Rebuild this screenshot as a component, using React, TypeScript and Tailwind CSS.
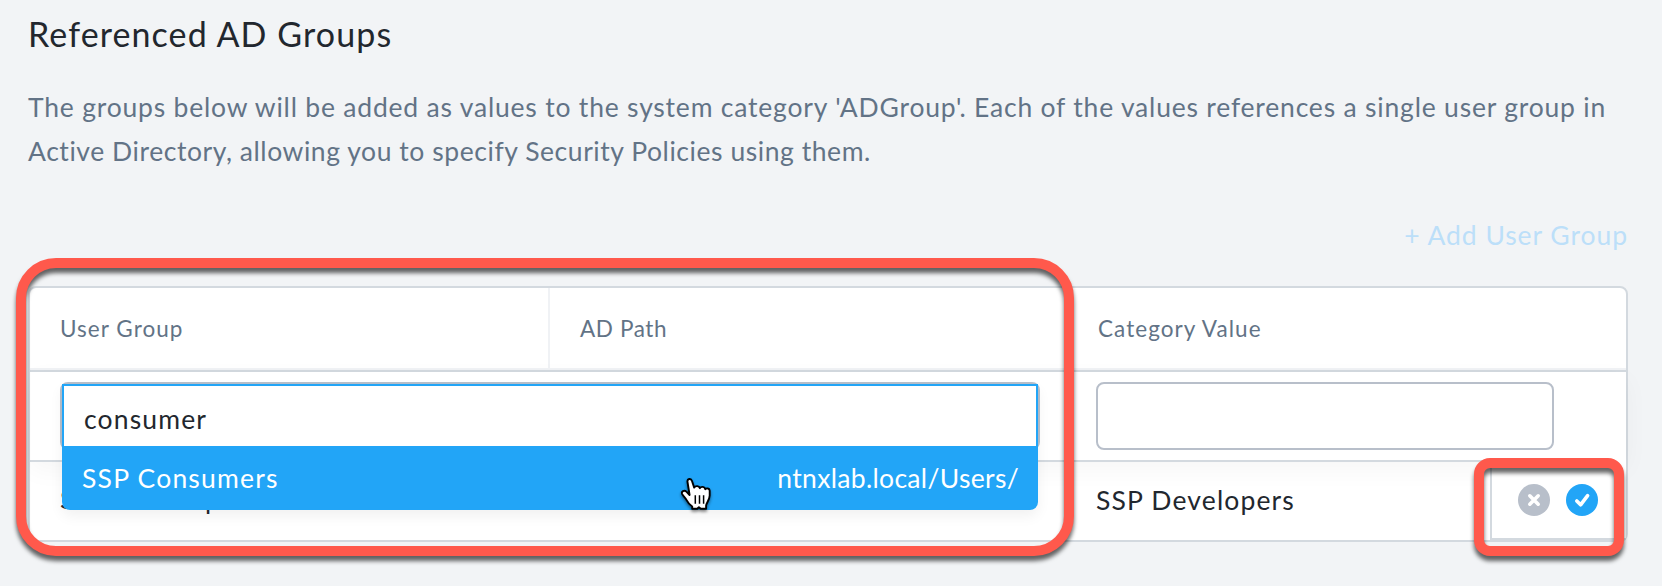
function XCircle() {
  return (
    <svg width="32" height="32" viewBox="0 0 32 32" fill="none">
      <circle cx="16" cy="16" r="16" fill="#b8bfca" />
      <path d="M11.8 11.8L20.2 20.2M20.2 11.8L11.8 20.2" stroke="#fff" strokeWidth="3.6" strokeLinecap="round" />
    </svg>
  );
}

function CheckCircle() {
  return (
    <svg width="32" height="32" viewBox="0 0 32 32" fill="none">
      <circle cx="16" cy="16" r="16" fill="#22a5f7" />
      <path d="M10.8 17L14.6 20.8L21.6 11.6" stroke="#fff" strokeWidth="3.6" strokeLinecap="round" strokeLinejoin="round" />
    </svg>
  );
}

function HandCursor() {
  return (
    <svg
      className="absolute left-[618px] top-[93px] drop-shadow-[0_2px_1.5px_rgba(0,0,0,0.45)]"
      width="32"
      height="36"
      viewBox="0 0 32 36"
      fill="none"
    >
      <path
        d="M12.2 29.5V31.8H17.2L18.9 30.2L20.8 31.8H26.1V28.6C26.3 26.2 29.7 22.5 29.7 18.5V13.8C29.7 11.2 26.3 10.8 25.3 12.3C24.8 9.6 21 9 19.9 11.2C19.2 8.8 15.5 8.4 14.2 10.6L12 4C10.9 .8 6.9 1.6 7.5 5L9.6 18L6.4 14.6C4.2 12.6 .9 14.4 2.2 17.1C3.6 19.8 5.4 20.6 6.6 23.2C8 26.1 9.6 27.8 12.2 29.5Z"
        fill="#fff"
        stroke="#000"
        strokeWidth="1.9"
        strokeLinejoin="round"
      />
      <path d="M15.3 18.3V26.8M19.5 18.3V26.8M23.6 18.3V26.8" stroke="#000" strokeWidth="1.5" />
    </svg>
  );
}

export default function App() {
  return (
    <div className="relative h-[586px] w-[1662px] overflow-hidden bg-[#f2f4f6] pl-7 pr-[34px] pt-3 font-['Lato','Liberation_Sans',sans-serif] text-[26.5px] text-[#22272e]">
      <h1 className="text-[34px] leading-[44px] tracking-[1.1px]">Referenced AD Groups</h1>
      <p className="mt-[29px] whitespace-nowrap leading-[44px] text-[#627386]">
        <span className="block tracking-[0.8px]">
          The groups below will be added as values to the system category 'ADGroup'. Each of the values references a single user group in
        </span>
        <span className="block tracking-[0.56px]">
          Active Directory, allowing you to specify Security Policies using them.
        </span>
      </p>
      <div className="mt-[46px] flex justify-end">
        <button className="leading-8 tracking-[0.95px] text-[#bcdff9]">+ Add User Group</button>
      </div>

      <div className="mt-[35px] h-[256px] rounded-lg border-2 border-[#d3d9df] bg-white">
        <div className="flex h-[84px] border-b-2 border-[#d3d9df] text-[22.5px] text-[#627386]">
          <div className="flex w-[520px] items-center border-b-2 border-r-2 border-[#f0f2f5] pl-[30px] pt-0.5 tracking-[1.05px]">
            User Group
          </div>
          <div className="flex w-[518px] items-center border-b-2 border-r-2 border-[#f0f2f5] pl-[30px] pt-0.5 tracking-[0.6px]">
            AD Path
          </div>
          <div className="flex flex-1 items-center border-b-2 border-[#f0f2f5] pl-[30px] pt-0.5 tracking-[1.05px]">
            Category Value
          </div>
        </div>

        <div className="relative z-10 flex h-[90px] border-b-2 border-[#d3d9df] bg-white pl-[30px] pt-2.5 shadow-[0_8px_24px_rgba(0,0,0,0.04)]">
          <div className="relative h-[68px] w-[980px] rounded-lg border-2 border-[#b8bfca]">
            <div className="absolute left-0 top-0 w-[976px] rounded-b-lg shadow-[0_6px_14px_rgba(0,0,0,0.06)]">
              <div className="flex h-[62px] items-center border-x-2 border-t-2 border-[#22a5f7] bg-white pl-5 pt-[7px] tracking-[1.15px]">
                consumer
              </div>
              <div className="flex h-16 items-center justify-between rounded-b-lg bg-[#22a5f7] pl-5 pr-[19px] pt-[1px] text-white">
                <span className="tracking-[1.2px]">SSP Consumers</span>
                <span className="tracking-[0.32px]">ntnxlab.local/Users/</span>
              </div>
              <HandCursor />
            </div>
          </div>
          <div className="ml-[56px] h-[68px] w-[458px] rounded-lg border-2 border-[#b8bfca] bg-white" />
        </div>

        <div className="flex h-[78px]">
          <div className="flex w-[520px] items-center pb-0.5 pl-[30px] tracking-[1.2px]">SSP Developers</div>
          <div className="flex w-[518px] items-center pb-1.5 pl-[30px] tracking-[0.25px]">ntnxlab.local/Users/</div>
          <div className="flex flex-1 items-center pl-7 tracking-[1.15px]">SSP Developers</div>
          <div className="relative z-20 -mt-0.5 flex h-[80px] w-[136px] items-center gap-4 border-b-2 border-l-2 border-[#d3d9df] bg-white pl-[26px] pt-0.5">
            <XCircle />
            <CheckCircle />
          </div>
        </div>
      </div>

      <div className="pointer-events-none absolute left-4 top-[258px] z-30 h-[298px] w-[1058px] rounded-[40px] border-[10px] border-[#ff594c] drop-shadow-[0_5px_2px_rgba(0,0,0,0.6)]" />
      <div className="pointer-events-none absolute left-[1474px] top-[458px] z-30 h-[98px] w-[150px] rounded-2xl border-[10px] border-[#ff594c] drop-shadow-[0_5px_2px_rgba(0,0,0,0.6)]" />
    </div>
  );
}
